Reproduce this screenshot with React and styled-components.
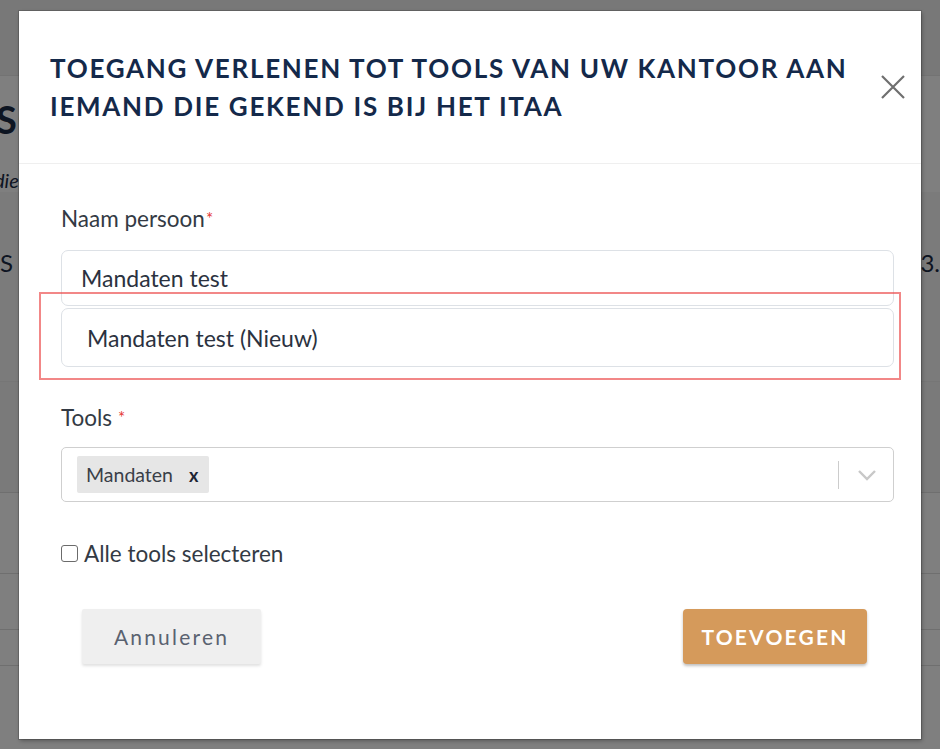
import styled, { createGlobalStyle } from 'styled-components';

const GlobalStyle = createGlobalStyle`
  html, body {
    margin: 0;
    padding: 0;
    background: #ffffff;
    font-family: Lato, "Open Sans", sans-serif;
  }
`;

const Page = styled.div`
  position: relative;
  width: 940px;
  height: 749px;
  overflow: hidden;
  background: #ffffff;
`;

const PageHeader = styled.div`
  height: 75px;
  background: #f1f1f1;
  border-bottom: 1px solid #e6e6e6;
`;

const PageTitle = styled.h1`
  margin: 20px 0 0 -4px;
  font-size: 38px;
  font-weight: 700;
  color: #1b2a44;
  letter-spacing: 1px;
`;

const PageLead = styled.p`
  margin: 26px 0 0 -6px;
  font-style: italic;
  font-size: 20px;
  color: #1b2a44;
`;

const TableHead = styled.div`
  height: 190px;
  display: flex;
  justify-content: space-between;
  padding-top: 56px;
  box-sizing: border-box;
  background: #f7f7f7;
  font-size: 24px;
  color: #1b2a44;
  border-bottom: 1px solid #ececec;
`;

const TableRow = styled.div`
  height: ${(p) => p.$h}px;
  background: ${(p) => p.$bg};
  border-bottom: 1px solid #dedede;
`;

const Backdrop = styled.div`
  position: absolute;
  inset: 0;
  background: rgba(0, 0, 0, 0.5);
`;

const Modal = styled.div`
  position: absolute;
  left: 19px;
  top: 11px;
  width: 902px;
  height: 728px;
  background: #ffffff;
  box-shadow: 0 0 0 1px rgba(0, 0, 0, 0.15), 1px 2px 4px rgba(0, 0, 0, 0.3);
  display: flex;
  flex-direction: column;
`;

const ModalHeader = styled.div`
  display: flex;
  justify-content: space-between;
  align-items: center;
  height: 153px;
  box-sizing: border-box;
  padding: 0 14px 0 31px;
  border-bottom: 1px solid #efefef;
`;

const ModalTitle = styled.h2`
  margin: 0;
  font-size: 26px;
  line-height: 38px;
  font-weight: 700;
  letter-spacing: 1.7px;
  color: #14294a;
  text-transform: uppercase;
`;

const CloseButton = styled.button`
  border: none;
  background: none;
  padding: 0;
  width: 28px;
  height: 28px;
  display: flex;
  align-items: center;
  justify-content: center;
  cursor: pointer;
`;

const ModalBody = styled.div`
  position: relative;
  padding: 41px 27px 0 42px;
  display: flex;
  flex-direction: column;
`;

const Label = styled.label`
  font-size: 22.5px;
  line-height: 28px;
  color: #333a44;
  margin-top: ${(p) => p.$mt || 0}px;
  margin-bottom: ${(p) => p.$gap}px;
`;

const Required = styled.span`
  color: #e53935;
  font-size: 17px;
  vertical-align: top;
  margin-left: ${(p) => (p.$spaced ? 6 : 1)}px;
`;

const Field = styled.div`
  height: ${(p) => p.$h}px;
  box-sizing: border-box;
  border: 1px solid #dde1e6;
  border-radius: 7px;
  display: flex;
  align-items: center;
  padding-left: ${(p) => p.$pad}px;
  font-size: 23px;
  color: #2b3240;
  margin-top: ${(p) => p.$mt || 0}px;
`;

const Highlight = styled.div`
  position: absolute;
  left: 20px;
  top: 128px;
  width: 862px;
  height: 88px;
  box-sizing: border-box;
  border: 2px solid rgba(235, 70, 70, 0.65);
  pointer-events: none;
`;

const Select = styled.div`
  height: 55px;
  box-sizing: border-box;
  border: 1px solid #cfcfcf;
  border-radius: 5px;
  display: flex;
  align-items: center;
  padding: 0 16px 0 15px;
  margin-bottom: 38px;
`;

const Tag = styled.div`
  display: flex;
  align-items: center;
  gap: 16px;
  height: 37px;
  padding: 0 11px 0 9px;
  background: #e6e6e6;
  border-radius: 2px;
  font-size: 19.5px;
  color: #3a3f48;
`;

const TagRemove = styled.span`
  font-weight: 700;
  font-size: 18px;
  color: #1d2433;
`;

const SelectControls = styled.div`
  margin-left: auto;
  display: flex;
  align-items: center;
  gap: 18px;
`;

const Divider = styled.span`
  width: 1px;
  height: 28px;
  background: #cccccc;
`;

const CheckRow = styled.label`
  display: flex;
  align-items: center;
  gap: 6px;
  font-size: 22.5px;
  color: #333a44;
`;

const CheckBox = styled.span`
  width: 17px;
  height: 17px;
  box-sizing: border-box;
  border: 1.5px solid #6b6b6b;
  border-radius: 3px;
`;

const Footer = styled.div`
  display: flex;
  justify-content: space-between;
  align-items: center;
  padding: 42px 54px 0 63px;
`;

const Button = styled.button`
  height: 55px;
  width: ${(p) => (p.$primary ? 184 : 179)}px;
  padding: 0;
  border: none;
  border-radius: ${(p) => (p.$primary ? 4 : 2)}px;
  background: ${(p) => (p.$primary ? '#d59a5b' : '#efefef')};
  color: ${(p) => (p.$primary ? '#ffffff' : '#5a6270')};
  font-family: Lato, "Open Sans", sans-serif;
  font-size: 21px;
  font-weight: ${(p) => (p.$primary ? 700 : 400)};
  letter-spacing: 2.2px;
  box-shadow: 0 2px 3px rgba(0, 0, 0, ${(p) => (p.$primary ? 0.25 : 0.12)});
  cursor: pointer;
`;

const App = () => {
  return (
    <>
      <GlobalStyle />
      <Page>
        <PageHeader />
        <PageTitle>SC</PageTitle>
        <PageLead>die</PageLead>
        <TableHead>
          <span>S</span>
          <span>3.</span>
        </TableHead>
        <TableRow $h={110} $bg="#f4f4f4" />
        <TableRow $h={80} $bg="#ffffff" />
        <TableRow $h={55} $bg="#ffffff" />
        <TableRow $h={35} $bg="#ffffff" />
        <Backdrop />
        <Modal>
          <ModalHeader>
            <ModalTitle>
              Toegang verlenen tot tools van uw kantoor aan
              <br />
              iemand die gekend is bij het ITAA
            </ModalTitle>
            <CloseButton aria-label="Sluiten">
              <svg width="26" height="26" viewBox="0 0 26 26">
                <path d="M2 2 L24 24 M24 2 L2 24" stroke="#6f6f6f" strokeWidth="2.2" fill="none" />
              </svg>
            </CloseButton>
          </ModalHeader>
          <ModalBody>
            <Label $gap={17}>
              Naam persoon<Required>*</Required>
            </Label>
            <Field $h={56} $pad={19}>Mandaten test</Field>
            <Field $h={59} $pad={25} $mt={2}>Mandaten test (Nieuw)</Field>
            <Highlight />
            <Label $gap={15} $mt={37}>
              Tools<Required $spaced>*</Required>
            </Label>
            <Select>
              <Tag>
                Mandaten
                <TagRemove>x</TagRemove>
              </Tag>
              <SelectControls>
                <Divider />
                <svg width="20" height="12" viewBox="0 0 20 12">
                  <path d="M2 2 L10 10 L18 2" stroke="#c8c8c8" strokeWidth="2.4" fill="none" />
                </svg>
              </SelectControls>
            </Select>
            <CheckRow>
              <CheckBox />
              Alle tools selecteren
            </CheckRow>
          </ModalBody>
          <Footer>
            <Button>Annuleren</Button>
            <Button $primary>TOEVOEGEN</Button>
          </Footer>
        </Modal>
      </Page>
    </>
  );
};

export default App;
